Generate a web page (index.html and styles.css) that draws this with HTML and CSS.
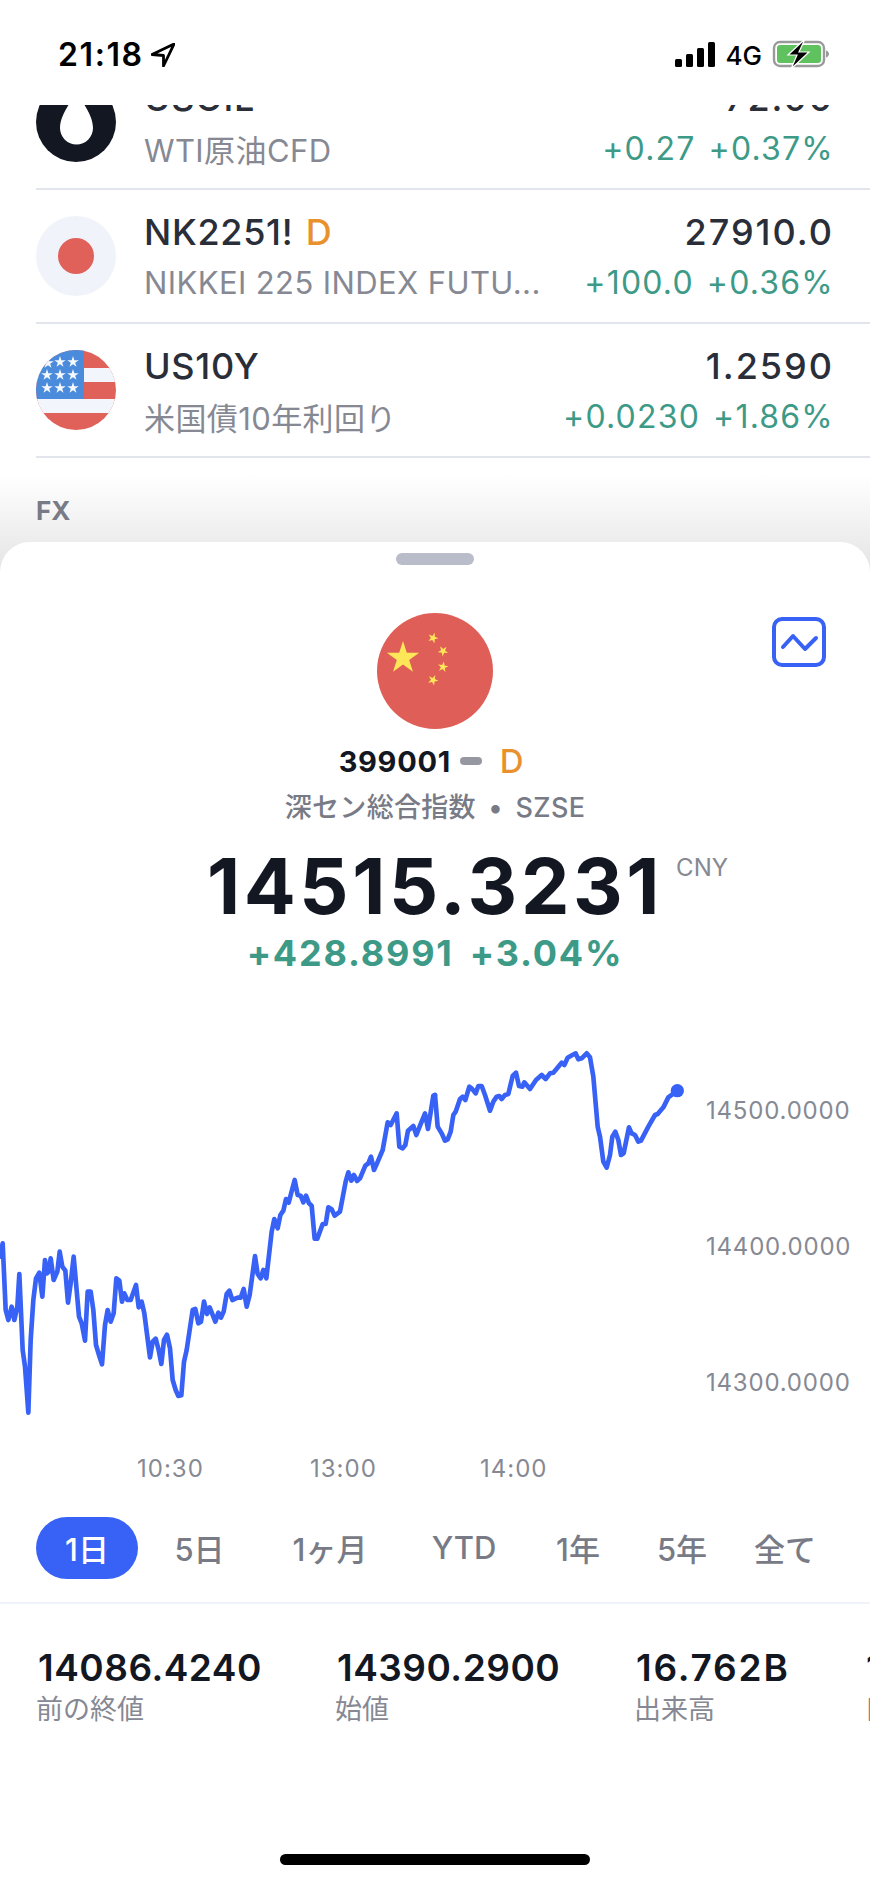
FILE: index.html
```html
<!DOCTYPE html>
<html lang="ja">
<head>
<meta charset="utf-8">
<title>399001</title>
<link rel="stylesheet" href="styles.css">
</head>
<body>
<svg class="defs" width="0" height="0" aria-hidden="true">
  <defs>
    <polygon id="star" points="0,-1 .225,-.309 .951,-.309 .363,.118 .588,.809 0,.382 -.588,.809 -.363,.118 -.951,-.309 -.225,-.309"/>
  </defs>
</svg>
<div class="page">
  <header class="status">
    <div class="status-left">
      <span class="clock">21:18</span>
      <svg class="loc" viewBox="0 0 24 24"><path d="M23 1 1 11.5l11.5 1V23Z"/></svg>
    </div>
    <div class="status-right">
      <div class="signal"><i class="b1"></i><i class="b2"></i><i class="b3"></i><i class="b4"></i></div>
      <span class="net">4G</span>
      <svg class="battery" viewBox="0 0 56 28">
        <rect class="bat-shell" x="1" y="2" width="50" height="24" rx="6"/>
        <rect class="bat-fill" x="4" y="5" width="44" height="18" rx="3"/>
        <path class="bat-nub" d="M53 10.500c2 .6 3 2 3 3.500s-1 2.900-3 3.500Z"/>
        <path class="bat-bolt" d="M32-1 15 15h9l-6 14 18-17H26l6-13Z"/>
      </svg>
    </div>
  </header>

  <section class="list">
    <div class="rows">
      <article class="row">
        <svg class="ico" viewBox="0 0 80 80"><circle cx="40" cy="40" r="40" fill="#131722"/><path d="M40.500 8C36 20 24 32 24 46a16.500 16.500 0 0 0 33 0C57 32 45 20 40.500 8Z" fill="#fff"/></svg>
        <div class="cell">
          <div class="line"><span class="name">USOIL</span><span class="val">72.00</span></div>
          <div class="line"><span class="desc">WTI原油CFD</span><span class="chg"><span>+0.27</span><span>+0.37%</span></span></div>
        </div>
      </article>
      <article class="row">
        <svg class="ico" viewBox="0 0 80 80"><circle cx="40" cy="40" r="40" fill="#f0f3fa"/><circle cx="40" cy="40" r="18" fill="#e0605a"/></svg>
        <div class="cell">
          <div class="line"><span class="name">NK2251! <b class="tag">D</b></span><span class="val">27910.0</span></div>
          <div class="line"><span class="desc">NIKKEI 225 INDEX FUTU...</span><span class="chg"><span>+100.0</span><span>+0.36%</span></span></div>
        </div>
      </article>
      <article class="row">
        <svg class="ico" viewBox="0 0 80 80">
          <clipPath id="round"><circle cx="40" cy="40" r="40"/></clipPath>
          <g clip-path="url(#round)">
            <rect width="80" height="80" fill="#e0605a"/>
            <rect y="18" width="80" height="14" fill="#f2f5fc"/>
            <rect y="49" width="80" height="14" fill="#f2f5fc"/>
            <rect width="48" height="49" fill="#4a8bdc"/>
            <g fill="#f5f8fd">
              <use href="#star" transform="translate(12 13) scale(6)"/><use href="#star" transform="translate(24 12) scale(6)"/><use href="#star" transform="translate(37 12) scale(6)"/>
              <use href="#star" transform="translate(11 25) scale(6)"/><use href="#star" transform="translate(24 25) scale(6)"/><use href="#star" transform="translate(37 25) scale(6)"/>
              <use href="#star" transform="translate(11 38) scale(6)"/><use href="#star" transform="translate(24 38) scale(6)"/><use href="#star" transform="translate(37 38) scale(6)"/>
            </g>
          </g>
        </svg>
        <div class="cell">
          <div class="line"><span class="name">US10Y</span><span class="val">1.2590</span></div>
          <div class="line"><span class="desc">米国債10年利回り</span><span class="chg"><span>+0.0230</span><span>+1.86%</span></span></div>
        </div>
      </article>
    </div>
    <h2 class="section">FX</h2>
  </section>

  <main class="sheet">
    <div class="handle"></div>
    <svg class="chart-toggle" viewBox="0 0 56 52">
      <rect x="3" y="3" width="50" height="46" rx="8"/>
      <path d="M12 31 22 20l12 13 11-11"/>
    </svg>
    <svg class="flag" viewBox="0 0 116 116">
      <circle cx="58" cy="58" r="58" fill="#df5f58"/>
      <g fill="#fde658">
        <use href="#star" transform="translate(26 45) scale(17)"/>
        <use href="#star" transform="translate(56 25) rotate(20) scale(5.500)"/>
        <use href="#star" transform="translate(66 38) rotate(40) scale(5.500)"/>
        <use href="#star" transform="translate(66 54) rotate(10) scale(5.500)"/>
        <use href="#star" transform="translate(56 67) rotate(25) scale(5.500)"/>
      </g>
    </svg>
    <div class="symbol"><span>399001</span><i class="dash"></i><b class="tag tag-lg">D</b></div>
    <div class="exchange">深セン総合指数 • SZSE</div>
    <div class="price"><span class="price-num">14515.3231<span class="cur">CNY</span></span></div>
    <div class="change"><span>+428.8991</span><span>+3.04%</span></div>

    <div class="chart">
      <svg class="plot" viewBox="0 90 2100 1230">
        <path d="M0,770 8,730 17,930 25,960 35,920 43,960 52,920 58,822 68,1050 75,1100 85,1238 92,1020 100,900 108,835 118,818 127,890 135,780 141,820 146,815 152,775 161,840 172,815 179,755 187,800 196,812 204,908 212,850 221,770 237,950 245,970 255,1022 263,875 272,875 280,930 288,1035 297,1065 306,1093 315,975 323,930 332,965 341,940 349,835 358,842 366,905 373,880 382,900 392,900 408,855 416,922 425,905 433,940 450,1072 458,1025 467,1016 476,1050 484,1092 492,1020 501,1004 510,1045 518,1140 527,1170 535,1188 544,1186 552,1085 560,1050 578,930 586,927 595,970 603,965 612,905 621,942 629,922 646,965 655,938 663,953 671,935 680,882 688,872 697,900 713,893 722,893 731,867 740,920 749,885 765,768 773,822 782,835 790,810 799,835 815,695 823,657 833,685 841,645 850,632 858,597 866,608 884,540 893,585 902,587 910,607 918,587 927,610 935,617 944,716 952,716 968,672 977,672 985,622 995,628 1004,647 1020,635 1037,545 1045,517 1054,542 1062,525 1071,543 1080,535 1096,497 1105,490 1113,470 1122,510 1131,490 1148,450 1163,367 1172,375 1190,340 1198,440 1208,445 1216,435 1224,392 1240,378 1249,405 1258,382 1275,340 1284,387 1300,287 1305,285"/>
        <g transform="translate(1305 0)">
          <path d="M0,285 8,380 20,400 30,422 38,418 47,395 55,345 62,335 75,297 83,290 91,300 103,260 110,265 122,280 130,258 140,258 150,285 165,332 175,305 185,290 193,288 200,297 210,285 220,282 233,228 243,218 252,258 262,260 268,247 285,267 303,240 320,225 332,237 345,220 355,218 380,188 388,195 398,173 412,165 422,160 430,178 440,175 455,160 465,172 475,230 488,380 495,410 505,485 515,503 525,465 532,410 541,395 550,420 558,465 566,460 582,382 590,400 600,405 610,425 618,422 640,380 660,345 668,342 685,322 700,292 727,272"/>
          <circle cx="727" cy="272" r="20"/>
        </g>
      </svg>
      <div class="axis"><span>14500.0000</span><span>14400.0000</span><span>14300.0000</span></div>
    </div>
    <div class="times"><span>10:30</span><span>13:00</span><span>14:00</span></div>

    <nav class="tabs">
      <span class="tab active">1日</span><span class="tab">5日</span><span class="tab">1ヶ月</span><span class="tab">YTD</span><span class="tab">1年</span><span class="tab">5年</span><span class="tab">全て</span>
    </nav>

    <div class="stats">
      <div class="stat s-wide"><div class="stat-v">14086.4240</div><div class="stat-l">前の終値</div></div>
      <div class="stat s-wide"><div class="stat-v">14390.2900</div><div class="stat-l">始値</div></div>
      <div class="stat s-mid"><div class="stat-v">16.762B</div><div class="stat-l">出来高</div></div>
      <div class="stat"><div class="stat-v">14515.3231</div><div class="stat-l">日中の値幅</div></div>
    </div>

    <div class="home"></div>
  </main>
</div>
</body>
</html>
```

FILE: styles.css
```css
* { box-sizing: border-box; margin: 0; padding: 0; }
html, body { background: #fff; }
body {
  width: 870px;
  height: 1883px;
  overflow: hidden;
  font-family: Inter, "Noto Sans CJK JP", sans-serif;
  color: #131722;
}
.defs { display: block; height: 0; }
.page { width: 870px; height: 1883px; display: flex; flex-direction: column; overflow: hidden; }

/* status bar */
.status {
  height: 105px;
  flex: none;
  display: flex;
  justify-content: space-between;
  align-items: flex-start;
  padding: 38px 41px 0 58px;
  background: #fff;
}
.status-left { display: flex; align-items: center; gap: 7px; height: 34px; }
.clock { font-size: 32px; font-weight: 600; line-height: 34px; color: #000; letter-spacing: 1.6px; }
.loc { width: 24px; height: 24px; fill: #fff; stroke: #000; stroke-width: 2.800; stroke-linejoin: round; }
.status-right { display: flex; align-items: flex-end; height: 30px; }
.signal { display: flex; align-items: flex-end; gap: 4px; height: 25px; margin-bottom: 1px; }
.signal i { display: block; width: 7px; background: #000; border-radius: 1.500px; }
.b1 { height: 8px; } .b2 { height: 13px; } .b3 { height: 19px; } .b4 { height: 25px; }
.net { font-size: 26px; font-weight: 500; line-height: 25px; margin-left: 11px; color: #000; }
.battery { width: 56px; height: 28px; margin-left: 11px; overflow: visible; }
.bat-shell { fill: none; stroke: #9a9a9a; stroke-width: 2.400; }
.bat-fill { fill: #5fc25f; }
.bat-nub { fill: #9a9a9a; }
.bat-bolt { fill: #000; stroke: #fff; stroke-width: 1.200; }

/* list behind sheet */
.list { height: 467px; margin-bottom: -30px; flex: none; overflow: hidden; display: flex; flex-direction: column; }
.rows { margin-top: -49px; flex: none; }
.row {
  height: 134px;
  margin-left: 36px;
  padding-right: 36px;
  display: flex;
  align-items: center;
  gap: 28px;
  border-bottom: 2px solid #e3e5ec;
}
.ico { width: 80px; height: 80px; flex: none; }
.cell { flex: 1; min-width: 0; margin-top: 2px; }
.line { display: flex; justify-content: space-between; align-items: center; height: 50px; white-space: nowrap; }
.name { font-size: 36px; font-weight: 500; color: #2a2e39; letter-spacing: .7px; }
.val { font-size: 36px; font-weight: 500; color: #2a2e39; letter-spacing: 2px; }
.tag { font-weight: 500; color: #e8912d; margin-left: 2px; }
.desc { font-size: 31px; color: #868993; letter-spacing: .4px; }
.chg { display: flex; gap: 13px; font-size: 32px; letter-spacing: 1.200px; color: #3d9a87; }
.section {
  flex: 1;
  padding: 38px 0 0 36px;
  font-size: 26px;
  line-height: 30px;
  font-weight: 700;
  color: #787b86;
  background: linear-gradient(#fff 0, #fff 15%, #e4e4e4 100%);
}

/* sheet */
.sheet {
  flex: 1;
  position: relative;
  display: flex;
  flex-direction: column;
  background: #fff;
  border-radius: 30px 30px 0 0;
  padding-top: 11px;
  overflow: hidden;
}
.handle { width: 78px; height: 12px; border-radius: 6px; background: #b9bcc9; align-self: center; flex: none; }
.chart-toggle { position: absolute; top: 74px; right: 43px; width: 56px; height: 52px; fill: none; stroke: #3861f6; stroke-width: 4; stroke-linecap: round; stroke-linejoin: round; }
.flag { width: 116px; height: 116px; align-self: center; margin-top: 48px; flex: none; }
.symbol { display: flex; align-items: center; justify-content: center; height: 40px; margin-top: 12px; padding-right: 7px; font-size: 29px; font-weight: 700; letter-spacing: .7px; }
.dash { width: 22px; height: 8px; border-radius: 4px; background: #9598a1; margin-left: 9px; }
.tag-lg { font-size: 33px; margin-left: 18px; }
.exchange { text-align: center; font-size: 27px; line-height: 36px; margin-top: 9px; font-weight: 500; color: #787b86; letter-spacing: .3px; word-spacing: 5px; }
.price { text-align: center; margin-top: 16px; height: 84px; line-height: 88px; font-size: 77px; font-weight: 700; letter-spacing: 3.600px; }
.price-num { position: relative; display: inline-block; }
.cur { position: absolute; left: calc(100% + 13px); top: 12px; font-size: 24px; line-height: 28px; font-weight: 400; letter-spacing: 0; color: #868993; }
.change { display: flex; justify-content: center; gap: 16px; margin-top: 5px; height: 44px; line-height: 44px; font-size: 36px; font-weight: 700; letter-spacing: 1.800px; color: #3d9a87; }

/* chart */
.chart { display: flex; height: 410px; margin-top: 55px; flex: none; }
.plot { width: 700px; height: 410px; flex: none; fill: none; stroke: #3861f6; stroke-width: 14; stroke-linejoin: round; stroke-linecap: round; }
.plot circle { fill: #3861f6; stroke: none; }
.axis { display: flex; flex-direction: column; gap: 108px; padding: 67px 0 0 6px; font-size: 24px; line-height: 28px; letter-spacing: .8px; color: #868993; }
.times { display: grid; grid-template-columns: 173px 170px auto; padding: 4px 0 0 137px; height: 54px; align-items: center; font-size: 24px; line-height: 28px; letter-spacing: 1px; color: #868993; flex: none; }

/* tabs */
.tabs {
  display: grid;
  grid-template-columns: 102px 123px 138px 130px 98px 110px 96px;
  margin-top: 23px;
  padding-left: 36px;
  height: 62px;
  flex: none;
  white-space: nowrap;
}
.tab { display: flex; align-items: center; justify-content: center; padding-bottom: 2px; font-size: 31px; font-weight: 500; color: #787b86; }
.active { background: #3861f6; color: #fff; border-radius: 31px; }

/* stats */
.stats { display: flex; margin-top: 23px; padding: 41px 0 0 36px; border-top: 2px solid #f0f3fa; white-space: nowrap; flex: none; }
.stat { flex: none; }
.s-wide { width: 299px; }
.s-mid { width: 230px; }
.stat-v { font-size: 37px; font-weight: 600; line-height: 46px; margin-left: 2px; letter-spacing: .5px; }
.s-mid .stat-v { letter-spacing: 1.800px; }
.stat-l { font-size: 27px; line-height: 38px; color: #868993; }

.home { width: 310px; height: 11px; border-radius: 6px; background: #000; align-self: center; margin-top: auto; margin-bottom: 18px; flex: none; }
```
